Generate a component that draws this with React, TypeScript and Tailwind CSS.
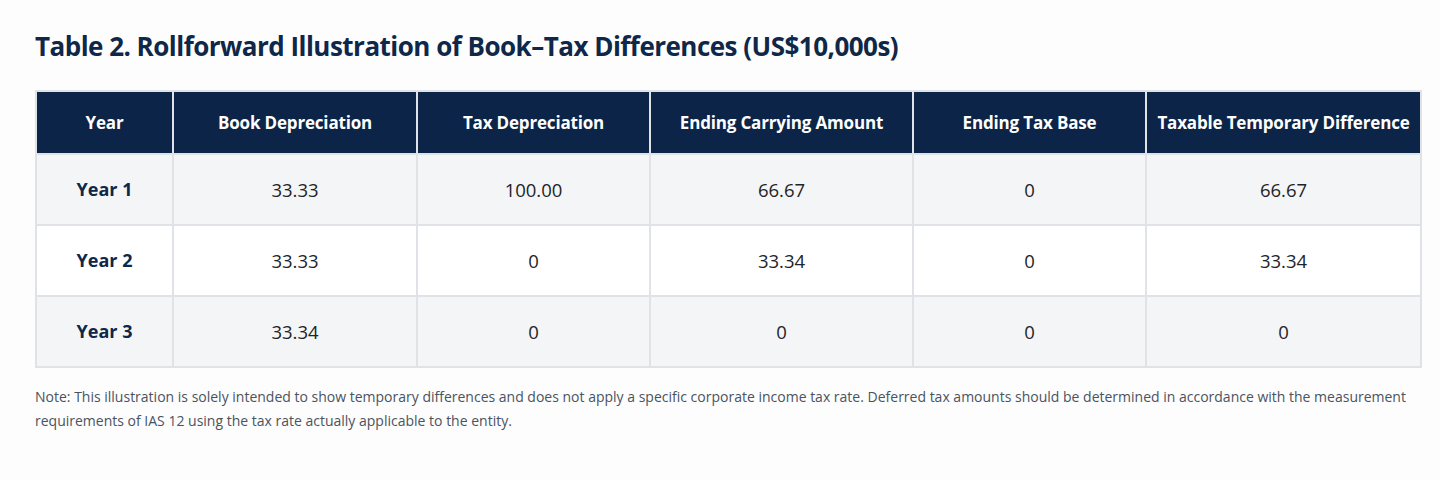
const rows = [
  ["Year 1", "33.33", "100.00", "66.67", "0", "66.67"],
  ["Year 2", "33.33", "0", "33.34", "0", "33.34"],
  ["Year 3", "33.34", "0", "0", "0", "0"],
];

const headers = [
  "Year",
  "Book Depreciation",
  "Tax Depreciation",
  "Ending Carrying Amount",
  "Ending Tax Base",
  "Taxable Temporary Difference",
];

const widths = ["w-[137px]", "w-[244px]", "w-[233px]", "w-[263px]", "w-[233px]", "w-[275px]"];

export default function App() {
  return (
    <div className="min-h-[480px] bg-[#fdfdfd] pl-[35px] pr-[20px] pt-[29px] font-['Open_Sans',sans-serif]">
      <h1 className="text-[26px] leading-[34px] font-bold tracking-[-0.02em] text-[#0f2748]">
        Table 2. Rollforward Illustration of Book–Tax Differences (US$10,000s)
      </h1>
      <table className="mt-[27px] w-[1385px] table-fixed border-collapse">
        <colgroup>
          {widths.map((w, i) => (
            <col key={i} className={w} />
          ))}
        </colgroup>
        <thead>
          <tr className="h-[63px] bg-[#0b2447]">
            {headers.map((h, i) => (
              <th
                key={i}
                className="border-2 border-[#dfe2e6] px-1 text-center text-[17px] font-bold tracking-[-0.01em] text-white"
              >
                {h}
              </th>
            ))}
          </tr>
        </thead>
        <tbody>
          {rows.map((r, ri) => (
            <tr key={ri} className={ri % 2 === 0 ? "h-[71px] bg-[#f4f5f7]" : "h-[71px] bg-white"}>
              {r.map((c, ci) => (
                <td
                  key={ci}
                  className={
                    ci === 0
                      ? "border-2 border-[#dfe2e6] text-center text-[18px] font-bold text-[#0f2748]"
                      : "border-2 border-[#dfe2e6] text-center text-[18.5px] text-[#1f2428]"
                  }
                >
                  {c}
                </td>
              ))}
            </tr>
          ))}
        </tbody>
      </table>
      <p className="mt-[17px] text-[14px] leading-[24px] text-[#4a5360]">
        Note: This illustration is solely intended to show temporary differences and does not apply a specific corporate income tax rate. Deferred tax amounts should be determined in accordance with the measurement requirements of IAS 12 using the tax rate actually applicable to the entity.
      </p>
    </div>
  );
}
